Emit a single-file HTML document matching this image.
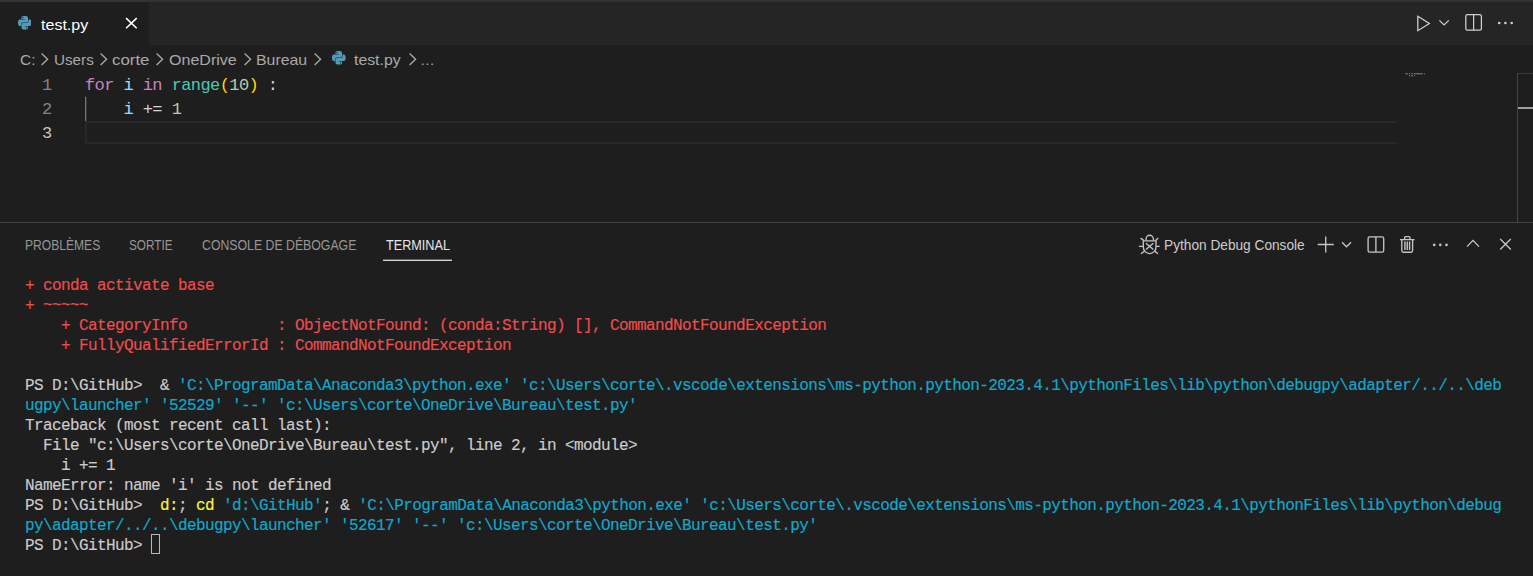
<!DOCTYPE html>
<html lang="fr"><head><meta charset="utf-8"><title>test.py - Visual Studio Code</title>
<style>
html,body{margin:0;padding:0;background:#1e1e1e;overflow:hidden}
body{width:1533px;height:576px;position:relative;font-family:"Liberation Sans",sans-serif;-webkit-font-smoothing:antialiased}
.a{position:absolute;display:block}
.t{position:absolute;white-space:pre;transform-origin:0 77.7%;font-family:"Liberation Sans",sans-serif}
.m{font-family:"Liberation Mono",monospace}
#topstrip{left:0;top:0;width:1533px;height:2px;background:#333333}
#tabbar{left:0;top:2px;width:1533px;height:43px;background:#252526}
#tab{left:0;top:2px;width:149px;height:43px;background:#1e1e1e}
.ln{position:absolute;left:0;width:51.7px;text-align:right;font-family:"Liberation Mono",monospace;font-size:17px;letter-spacing:-0.58px;line-height:24px;color:#858585;white-space:pre}
.code{position:absolute;left:85px;font-family:"Liberation Mono",monospace;font-size:17px;letter-spacing:-0.58px;line-height:24px;color:#d4d4d4;white-space:pre}
.k{color:#c586c0}.v{color:#9cdcfe}.f{color:#4ec9b0}.b{color:#ffd700}.n{color:#b5cea8}
#term .row{position:absolute;left:25px;height:20px;font-family:"Liberation Mono",monospace;font-size:16px;letter-spacing:-0.6px;line-height:20px;color:#cccccc;white-space:pre;transform:scaleY(1.06);transform-origin:0 0;-webkit-text-stroke:0.15px}
#term .r{color:#f14c4c}#term .c{color:#11a8cd}#term .y{color:#f5f543}
</style></head><body>
<div id="topstrip" class="a"></div>
<div id="tabbar" class="a"></div>
<div id="tab" class="a"></div>

<svg class="a" style="left:17.9px;top:16.3px" width="13.5" height="13.5" viewBox="0 0 24 24"><path fill="#519aba" d="M14.25.18l.9.2.73.26.59.3.45.32.34.34.25.34.16.33.1.3.04.26.02.2-.01.13V8.5l-.05.63-.13.55-.21.46-.26.38-.3.31-.33.25-.35.19-.35.14-.33.1-.3.07-.26.04-.21.02H8.77l-.69.05-.59.14-.5.22-.41.27-.33.32-.27.35-.2.36-.15.37-.1.35-.07.32-.04.27-.02.21v3.06H3.17l-.21-.03-.28-.07-.32-.12-.35-.18-.36-.26-.36-.36-.35-.46-.32-.59-.28-.73-.21-.88-.14-1.05-.05-1.23.06-1.22.16-1.04.24-.87.32-.71.36-.57.4-.44.42-.33.42-.24.4-.16.36-.1.32-.05.24-.01h.16l.06.01h8.16v-.83H6.18l-.01-2.75-.02-.37.05-.34.11-.31.17-.28.25-.26.31-.23.38-.2.44-.18.51-.15.58-.12.64-.1.71-.06.77-.04.84-.02 1.27.05zm-6.3 1.98l-.23.33-.08.41.08.41.23.34.33.22.41.09.41-.09.33-.22.23-.34.08-.41-.08-.41-.23-.33-.33-.22-.41-.09-.41.09zm13.09 3.95l.28.06.32.12.35.18.36.27.36.35.35.47.32.59.28.73.21.88.14 1.04.05 1.23-.06 1.23-.16 1.04-.24.86-.32.71-.36.57-.4.45-.42.33-.42.24-.4.16-.36.09-.32.05-.24.02-.16-.01h-8.22v.82h5.84l.01 2.76.02.36-.05.34-.11.31-.17.29-.25.25-.31.24-.38.2-.44.17-.51.15-.58.13-.64.09-.71.07-.77.04-.84.01-1.27-.04-1.07-.14-.9-.2-.73-.25-.59-.3-.45-.33-.34-.34-.25-.34-.16-.33-.1-.3-.04-.25-.02-.2.01-.13v-5.34l.05-.64.13-.54.21-.46.26-.38.3-.32.33-.24.35-.2.35-.14.33-.1.3-.06.26-.04.21-.02.13-.01h5.84l.69-.05.59-.14.5-.21.41-.28.33-.32.27-.35.2-.36.15-.36.1-.35.07-.32.04-.28.02-.21V6.07h2.09l.14.01zm-6.47 14.25l-.23.33-.08.41.08.41.23.33.33.23.41.08.41-.08.33-.23.23-.33.08-.41-.08-.41-.23-.33-.33-.23-.41-.08-.41.08z"/></svg>
<span id="tabtxt" class="t" style="left:40.85px;top:14.80px;font-size:15px;line-height:20px;color:#ffffff;font-weight:400;transform:scale(1.0697,1.0000)">test.py</span>
<svg class="a" style="left:123px;top:15px" width="17" height="17" viewBox="0 0 17 17"><path d="M3.1 3.1 L13.7 13.2 M13.7 3.1 L3.1 13.2" stroke="#ffffff" stroke-width="1.55" fill="none"/></svg>
<svg class="a" style="left:1410px;top:10px" width="110" height="28" viewBox="1410 10 110 28" fill="none" stroke="#d0d0d0" stroke-width="1.25"><path d="M1417.8 16.3 L1429.4 23.5 L1417.8 30.7 Z" stroke-linejoin="miter"/><path d="M1439.4 20.4 L1444.1 24.9 L1448.8 20.4"/><rect x="1465.8" y="14.6" width="15.6" height="15.6" rx="1.6"/><path d="M1473.6 14.6 V30.2"/><g fill="#d0d0d0" stroke="none"><circle cx="1499.2" cy="23" r="1.3"/><circle cx="1505.4" cy="23" r="1.3"/><circle cx="1511.7" cy="23" r="1.3"/></g></svg>
<span id="bc1" class="t" style="left:19.50px;top:49.80px;font-size:15px;line-height:20px;color:#a9a9a9;font-weight:400;transform:scale(1.0310,1.0000)">C:</span>
<span id="bc2" class="t" style="left:53.80px;top:49.80px;font-size:15px;line-height:20px;color:#a9a9a9;font-weight:400;transform:scale(1.0147,1.0000)">Users</span>
<span id="bc3" class="t" style="left:112.10px;top:49.80px;font-size:15px;line-height:20px;color:#a9a9a9;font-weight:400;transform:scale(1.1241,1.0000)">corte</span>
<span id="bc4" class="t" style="left:169.15px;top:49.80px;font-size:15px;line-height:20px;color:#a9a9a9;font-weight:400;transform:scale(1.0702,1.0000)">OneDrive</span>
<span id="bc5" class="t" style="left:256.15px;top:49.80px;font-size:15px;line-height:20px;color:#a9a9a9;font-weight:400;transform:scale(1.0573,1.0000)">Bureau</span>
<span id="bc6" class="t" style="left:354.15px;top:49.80px;font-size:15px;line-height:20px;color:#a9a9a9;font-weight:400;transform:scale(1.0546,1.0000)">test.py</span>
<span id="bc7" class="t" style="left:420.00px;top:49.80px;font-size:15px;line-height:20px;color:#a9a9a9;font-weight:400;transform:scale(0.9864,1.0000)">…</span>
<svg class="a" style="left:37.80px;top:49.90px" width="13.30" height="18.40" viewBox="37.80 49.90 13.30 18.40"><path d="M41.40 53.40 L47.40 59.10 L41.40 64.80" fill="none" stroke="#a9a9a9" stroke-width="1.35"/></svg>
<svg class="a" style="left:97.00px;top:49.90px" width="13.30" height="18.40" viewBox="97.00 49.90 13.30 18.40"><path d="M100.60 53.40 L106.60 59.10 L100.60 64.80" fill="none" stroke="#a9a9a9" stroke-width="1.35"/></svg>
<svg class="a" style="left:153.30px;top:49.90px" width="13.30" height="18.40" viewBox="153.30 49.90 13.30 18.40"><path d="M156.90 53.40 L162.90 59.10 L156.90 64.80" fill="none" stroke="#a9a9a9" stroke-width="1.35"/></svg>
<svg class="a" style="left:240.50px;top:49.90px" width="13.30" height="18.40" viewBox="240.50 49.90 13.30 18.40"><path d="M244.10 53.40 L250.10 59.10 L244.10 64.80" fill="none" stroke="#a9a9a9" stroke-width="1.35"/></svg>
<svg class="a" style="left:311.00px;top:49.90px" width="13.30" height="18.40" viewBox="311.00 49.90 13.30 18.40"><path d="M314.60 53.40 L320.60 59.10 L314.60 64.80" fill="none" stroke="#a9a9a9" stroke-width="1.35"/></svg>
<svg class="a" style="left:405.50px;top:49.90px" width="13.30" height="18.40" viewBox="405.50 49.90 13.30 18.40"><path d="M409.10 53.40 L415.10 59.10 L409.10 64.80" fill="none" stroke="#a9a9a9" stroke-width="1.35"/></svg>
<svg class="a" style="left:332.3px;top:51.0px" width="13.6" height="13.6" viewBox="0 0 24 24"><path fill="#519aba" d="M14.25.18l.9.2.73.26.59.3.45.32.34.34.25.34.16.33.1.3.04.26.02.2-.01.13V8.5l-.05.63-.13.55-.21.46-.26.38-.3.31-.33.25-.35.19-.35.14-.33.1-.3.07-.26.04-.21.02H8.77l-.69.05-.59.14-.5.22-.41.27-.33.32-.27.35-.2.36-.15.37-.1.35-.07.32-.04.27-.02.21v3.06H3.17l-.21-.03-.28-.07-.32-.12-.35-.18-.36-.26-.36-.36-.35-.46-.32-.59-.28-.73-.21-.88-.14-1.05-.05-1.23.06-1.22.16-1.04.24-.87.32-.71.36-.57.4-.44.42-.33.42-.24.4-.16.36-.1.32-.05.24-.01h.16l.06.01h8.16v-.83H6.18l-.01-2.75-.02-.37.05-.34.11-.31.17-.28.25-.26.31-.23.38-.2.44-.18.51-.15.58-.12.64-.1.71-.06.77-.04.84-.02 1.27.05zm-6.3 1.98l-.23.33-.08.41.08.41.23.34.33.22.41.09.41-.09.33-.22.23-.34.08-.41-.08-.41-.23-.33-.33-.22-.41-.09-.41.09zm13.09 3.95l.28.06.32.12.35.18.36.27.36.35.35.47.32.59.28.73.21.88.14 1.04.05 1.23-.06 1.23-.16 1.04-.24.86-.32.71-.36.57-.4.45-.42.33-.42.24-.4.16-.36.09-.32.05-.24.02-.16-.01h-8.22v.82h5.84l.01 2.76.02.36-.05.34-.11.31-.17.29-.25.25-.31.24-.38.2-.44.17-.51.15-.58.13-.64.09-.71.07-.77.04-.84.01-1.27-.04-1.07-.14-.9-.2-.73-.25-.59-.3-.45-.33-.34-.34-.25-.34-.16-.33-.1-.3-.04-.25-.02-.2.01-.13v-5.34l.05-.64.13-.54.21-.46.26-.38.3-.32.33-.24.35-.2.35-.14.33-.1.3-.06.26-.04.21-.02.13-.01h5.84l.69-.05.59-.14.5-.21.41-.28.33-.32.27-.35.2-.36.15-.36.1-.35.07-.32.04-.28.02-.21V6.07h2.09l.14.01zm-6.47 14.25l-.23.33-.08.41.08.41.23.33.33.23.41.08.41-.08.33-.23.23-.33.08-.41-.08-.41-.23-.33-.33-.23-.41-.08-.41.08z"/></svg>
<svg class="a" style="left:84px;top:96px" width="4" height="26" viewBox="0 0 4 26"><rect x="1" y="0.8" width="1.3" height="24.2" fill="#767676"/></svg>
<div class="a" style="left:85px;top:121px;width:1312px;height:23px;box-sizing:border-box;border-top:2px solid #282828;border-bottom:2px solid #282828;border-left:2px solid #282828"></div>
<div class="ln" style="top:74px;color:#858585">1</div>
<div class="ln" style="top:98px;color:#858585">2</div>
<div class="ln" style="top:122px;color:#c6c6c6">3</div>
<div class="code" style="top:74px"><span class="k">for</span> <span class="v">i</span> <span class="k">in</span> <span class="f">range</span><span class="b">(</span><span class="n">10</span><span class="b">)</span> :</div>
<div class="code" style="top:98px">    <span class="v">i</span> += <span class="n">1</span></div>
<svg class="a" style="left:1404px;top:72px;opacity:.7" width="24" height="6" viewBox="0 0 24 6"><rect x="1" y="1" width="3" height="1.4" fill="#c586c0" opacity=".7"/><rect x="5" y="1" width="1" height="1.4" fill="#9cdcfe" opacity=".7"/><rect x="7" y="1" width="2" height="1.4" fill="#c586c0" opacity=".7"/><rect x="10" y="1" width="5" height="1.4" fill="#4ec9b0" opacity=".8"/><rect x="15" y="1" width="4" height="1.4" fill="#b5cea8" opacity=".6"/><rect x="20" y="1" width="1" height="1.4" fill="#d4d4d4" opacity=".5"/><rect x="5" y="3" width="1" height="1.4" fill="#9cdcfe" opacity=".7"/><rect x="7" y="3" width="2" height="1.4" fill="#d4d4d4" opacity=".5"/><rect x="10" y="3" width="1" height="1.4" fill="#b5cea8" opacity=".6"/></svg>
<div class="a" style="left:1517px;top:73px;width:16px;height:149px;box-sizing:border-box;border-left:1px solid #444444;border-top:1px solid #3a3a3a"></div>
<div class="a" style="left:1518px;top:107px;width:15px;height:2.3px;background:#a0a0a0"></div>
<div class="a" style="left:0;top:222px;width:1533px;height:1.2px;background:#424242"></div>
<span id="p1" class="t" style="left:24.75px;top:234.74px;font-size:14.6px;line-height:20px;color:#969696;font-weight:400;transform:scale(0.8281,1.0000)">PROBLÈMES</span>
<span id="p2" class="t" style="left:129.05px;top:234.74px;font-size:14.6px;line-height:20px;color:#969696;font-weight:400;transform:scale(0.8047,1.0000)">SORTIE</span>
<span id="p3" class="t" style="left:201.70px;top:234.74px;font-size:14.6px;line-height:20px;color:#969696;font-weight:400;transform:scale(0.8423,1.0000)">CONSOLE DE DÉBOGAGE</span>
<span id="p4" class="t" style="left:385.50px;top:234.74px;font-size:14.6px;line-height:20px;color:#e7e7e7;font-weight:400;transform:scale(0.8671,1.0000)">TERMINAL</span>
<svg class="a" style="left:383px;top:258px" width="69" height="4" viewBox="0 0 69 4"><rect x="0" y="1.65" width="69" height="1.25" fill="#e7e7e7"/></svg>
<svg class="a" style="left:1135px;top:230px" width="390" height="30" viewBox="1135 230 390 30" fill="none" stroke="#c5c5c5" stroke-width="1.35"><path d="M1146 240.2 v-1 a3.7 4 0 0 1 7.4 0 v1"/><path d="M1143.3 240.8 H1156 V247 a6.35 6.6 0 0 1 -12.7 0 Z"/><path d="M1143.6 240.4 L1140.6 238.1 M1155.6 240.4 L1158.2 238.1 M1143 246.4 H1138.9 M1156.2 246.4 H1159.7 M1144.3 251.4 L1140.9 253.8 M1155 251.4 L1158 253.8"/><path d="M1146 243.2 L1153.3 249.4 M1153.3 243.2 L1146 249.4"/><path d="M1325.7 236.5 V252.6 M1317.7 244.5 H1333.8"/><path d="M1342 242.2 L1346.5 246.8 L1351 242.2"/><rect x="1368.1" y="236.9" width="15.6" height="15.2" rx="1.6"/><path d="M1375.9 236.9 V252.1"/><path d="M1400 239.6 H1414.5 M1404.6 239.4 V237.6 a1 1 0 0 1 1 -1 h3.4 a1 1 0 0 1 1 1 V239.4"/><path d="M1401.8 239.8 V250.6 a1.6 1.6 0 0 0 1.6 1.6 h7.6 a1.6 1.6 0 0 0 1.6 -1.6 V239.8"/><path d="M1404.9 241.5 V250 M1407.25 241.5 V250 M1409.6 241.5 V250" stroke-width="1.4"/><g fill="#c5c5c5" stroke="none"><circle cx="1434.2" cy="244.9" r="1.3"/><circle cx="1440.3" cy="244.9" r="1.3"/><circle cx="1446.5" cy="244.9" r="1.3"/></g><path d="M1467 246.6 L1473 240.4 L1479 246.6"/><path d="M1500.2 239 L1510.8 249.4 M1510.8 239 L1500.2 249.4"/></svg>
<span id="pdc" class="t" style="left:1163.70px;top:235.08px;font-size:14.5px;line-height:20px;color:#cccccc;font-weight:400;transform:scale(0.9436,1.0000)">Python Debug Console</span>
<div id="term">
<div class="row" style="top:275px"><span class="r">+ conda activate base</span></div>
<div class="row" style="top:295px"><span class="r">+ ~~~~~</span></div>
<div class="row" style="top:315px"><span class="r">    + CategoryInfo          : ObjectNotFound: (conda:String) [], CommandNotFoundException</span></div>
<div class="row" style="top:335px"><span class="r">    + FullyQualifiedErrorId : CommandNotFoundException</span></div>
<div class="row" style="top:375px">PS D:\GitHub>  &amp; <span class="c">'C:\ProgramData\Anaconda3\python.exe' 'c:\Users\corte\.vscode\extensions\ms-python.python-2023.4.1\pythonFiles\lib\python\debugpy\adapter/../..\deb</span></div>
<div class="row" style="top:395px"><span class="c">ugpy\launcher' '52529' '--' 'c:\Users\corte\OneDrive\Bureau\test.py'</span></div>
<div class="row" style="top:415px">Traceback (most recent call last):</div>
<div class="row" style="top:435px">  File "c:\Users\corte\OneDrive\Bureau\test.py", line 2, in &lt;module&gt;</div>
<div class="row" style="top:455px">    i += 1</div>
<div class="row" style="top:475px">NameError: name 'i' is not defined</div>
<div class="row" style="top:495px">PS D:\GitHub>  <span class="y">d:</span>; <span class="y">cd</span> <span class="c">'d:\GitHub'</span>; &amp; <span class="c">'C:\ProgramData\Anaconda3\python.exe' 'c:\Users\corte\.vscode\extensions\ms-python.python-2023.4.1\pythonFiles\lib\python\debug</span></div>
<div class="row" style="top:515px"><span class="c">py\adapter/../..\debugpy\launcher' '52617' '--' 'c:\Users\corte\OneDrive\Bureau\test.py'</span></div>
<div class="row" style="top:535px">PS D:\GitHub> </div>
</div>
<div class="a" style="left:151px;top:534px;width:9px;height:20px;box-sizing:border-box;border:1px solid #b8b8b8"></div>
</body></html>
